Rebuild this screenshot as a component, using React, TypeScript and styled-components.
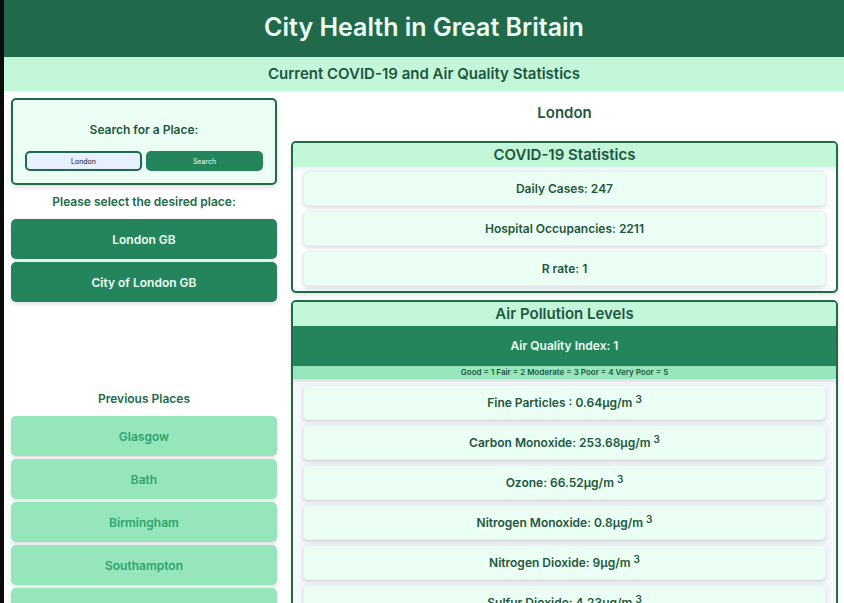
import React, { useState } from "react";
import styled, { createGlobalStyle } from "styled-components";

const c = {
  deep: "#20694b",
  ink: "#1f5640",
  strong: "#24855c",
  mid: "#2fa36c",
  soft: "#95e7bb",
  pale: "#c2f7d9",
  mist: "#ebfff4",
  wash: "#f4f8fb",
};

const GlobalStyle = createGlobalStyle`
  *, *::before, *::after { box-sizing: border-box; }
  html { scrollbar-width: none; background: #fff; }
  body { margin: 0; }
  body, button, input { font-family: Inter, "Liberation Sans", sans-serif; }
  h1, h2, h3, p, ul { margin: 0; padding: 0; }
  ul { list-style: none; }
`;

const Page = styled.div`
  min-height: 100vh;
  border-left: 4px solid #0d0b0a;
  color: ${c.ink};
  font-size: 12px;
  font-weight: 600;
  text-align: center;
`;

const Banner = styled.header`
  background: ${c.deep};
  color: ${c.mist};
  padding: 9px 16px 12px;
`;

const Title = styled.h1`
  font-size: 25px;
  line-height: 36px;
  font-weight: 600;
`;

const Tagline = styled.h2`
  background: ${c.pale};
  font-size: 15px;
  line-height: 34px;
  font-weight: 600;
`;

const Columns = styled.main`
  display: grid;
  grid-template-columns: minmax(0, 1fr) minmax(0, 2fr);
`;

const Sidebar = styled.aside`
  padding: 7px;
`;

const SearchCard = styled.form`
  display: flex;
  flex-direction: column;
  gap: 11px;
  padding: 20px 12px 12px;
  border: 2px solid ${c.deep};
  border-radius: 5px;
  background: ${c.mist};
  box-shadow: 0 3px 5px rgba(0, 0, 0, 0.12);
`;

const SearchLabel = styled.label`
  line-height: 20px;
  font-size: 12px;
`;

const SearchRow = styled.div`
  display: grid;
  grid-template-columns: 1fr 1fr;
  gap: 4px;
`;

const SearchInput = styled.input`
  min-width: 0;
  height: 20px;
  padding: 0 8px;
  border: 2px solid ${c.deep};
  border-radius: 5px;
  background: #e7f0fe;
  color: #111;
  font-size: 7px;
  text-align: center;
`;

const SearchButton = styled.button`
  height: 20px;
  padding: 0 8px;
  border: 0;
  border-radius: 5px;
  background: ${c.strong};
  color: ${c.mist};
  font-size: 7px;
`;

const SectionLabel = styled.h3`
  color: ${c.deep};
  font-size: 12px;
  line-height: 34px;
  font-weight: 600;
`;

const PlaceList = styled.ul`
  display: flex;
  flex-direction: column;
  gap: 3px;
`;

const Matches = styled.section`
  min-height: 197px;
`;

const PlaceButton = styled.button<{ $past?: boolean }>`
  display: block;
  width: 100%;
  height: 40px;
  border: 0;
  border-radius: 5px;
  background: ${(p) => (p.$past ? c.soft : c.strong)};
  color: ${(p) => (p.$past ? c.mid : c.mist)};
  font-size: 12px;
  font-weight: 600;
  box-shadow: 0 2px 4px rgba(0, 0, 0, 0.13);
`;

const Results = styled.section`
  padding: 7px 6px 7px 7px;
`;

const PlaceName = styled.h2`
  padding-bottom: 13px;
  font-size: 15px;
  line-height: 30px;
  font-weight: 600;
`;

const Panel = styled.section`
  margin-bottom: 7px;
  padding-bottom: 3px;
  border: 2px solid ${c.deep};
  border-radius: 5px;
  background: ${c.wash};
  overflow: hidden;
  box-shadow: 0 2px 4px rgba(0, 0, 0, 0.12);
`;

const PanelTitle = styled.h3`
  background: ${c.pale};
  font-size: 15px;
  line-height: 24px;
  font-weight: 600;
`;

const StatList = styled.ul<{ $plain?: boolean }>`
  display: flex;
  flex-direction: column;
  gap: 5px;
  margin-top: ${(p) => (p.$plain ? 4 : 6)}px;
  padding: 0 10px 2px;
  background: ${(p) => (p.$plain ? "#fff" : "transparent")};
`;

const Stat = styled.li`
  height: 35px;
  border: 1px solid #d9f8e7;
  border-radius: 5px;
  background: ${c.mist};
  font-size: 12px;
  line-height: 34px;
  box-shadow: 0 2px 4px rgba(0, 0, 0, 0.14);

  sup {
    font-size: 10px;
    line-height: 0;
    vertical-align: 4px;
  }
`;

const IndexBar = styled.p`
  background: ${c.strong};
  color: ${c.mist};
  line-height: 40px;
`;

const Legend = styled.p`
  background: ${c.soft};
  font-size: 8px;
  line-height: 13px;
  box-shadow: 0 2px 4px rgba(0, 0, 0, 0.12);
`;

const matches = ["London GB", "City of London GB"];
const previous = ["Glasgow", "Bath", "Birmingham", "Southampton", "Manchester"];
const covid = ["Daily Cases: 247", "Hospital Occupancies: 2211", "R rate: 1"];
const pollution = [
  "Fine Particles : 0.64",
  "Carbon Monoxide: 253.68",
  "Ozone: 66.52",
  "Nitrogen Monoxide: 0.8",
  "Nitrogen Dioxide: 9",
  "Sulfur Dioxide: 4.23",
];

export default function App() {
  const [query, setQuery] = useState("London");

  return (
    <>
      <GlobalStyle />
      <Page>
        <Banner>
          <Title>City Health in Great Britain</Title>
        </Banner>
        <Tagline>Current COVID-19 and Air Quality Statistics</Tagline>
        <Columns>
          <Sidebar>
            <SearchCard onSubmit={(e) => e.preventDefault()}>
              <SearchLabel htmlFor="place">Search for a Place:</SearchLabel>
              <SearchRow>
                <SearchInput
                  id="place"
                  value={query}
                  onChange={(e) => setQuery(e.target.value)}
                />
                <SearchButton type="submit">Search</SearchButton>
              </SearchRow>
            </SearchCard>
            <Matches>
              <SectionLabel>Please select the desired place:</SectionLabel>
              <PlaceList>
                {matches.map((name) => (
                  <li key={name}>
                    <PlaceButton type="button">{name}</PlaceButton>
                  </li>
                ))}
              </PlaceList>
            </Matches>
            <SectionLabel>Previous Places</SectionLabel>
            <PlaceList>
              {previous.map((name) => (
                <li key={name}>
                  <PlaceButton type="button" $past>
                    {name}
                  </PlaceButton>
                </li>
              ))}
            </PlaceList>
          </Sidebar>
          <Results>
            <PlaceName>London</PlaceName>
            <Panel>
              <PanelTitle>COVID-19 Statistics</PanelTitle>
              <StatList $plain>
                {covid.map((text) => (
                  <Stat key={text}>{text}</Stat>
                ))}
              </StatList>
            </Panel>
            <Panel>
              <PanelTitle>Air Pollution Levels</PanelTitle>
              <IndexBar>Air Quality Index: 1</IndexBar>
              <Legend>Good = 1 Fair = 2 Moderate = 3 Poor = 4 Very Poor = 5</Legend>
              <StatList>
                {pollution.map((text) => (
                  <Stat key={text}>
                    {text}μg/m <sup>3</sup>
                  </Stat>
                ))}
              </StatList>
            </Panel>
          </Results>
        </Columns>
      </Page>
    </>
  );
}
